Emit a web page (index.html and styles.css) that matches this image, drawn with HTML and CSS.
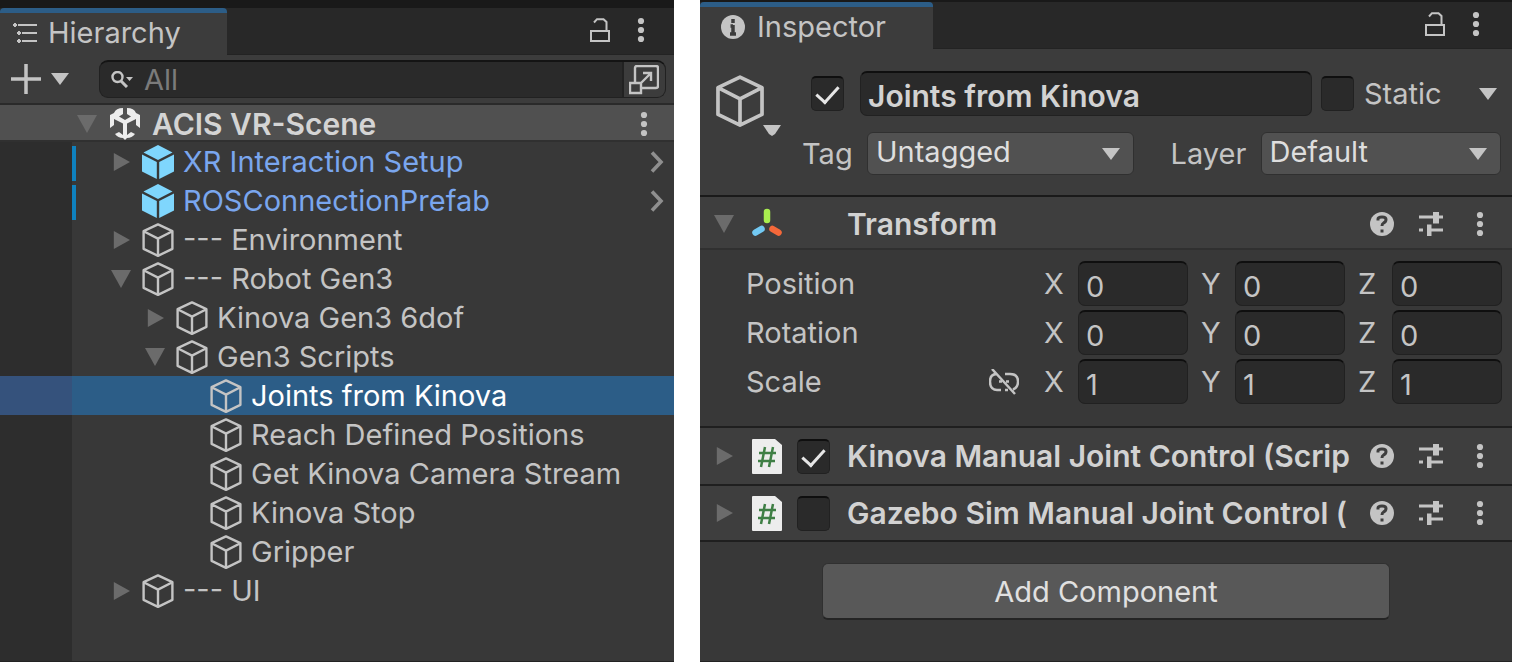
FILE: index.html
```html
<!DOCTYPE html>
<html lang="en">
<head>
<meta charset="utf-8">
<title>ACIS VR-Scene</title>
<link rel="stylesheet" href="styles.css">
</head>
<body>
<svg class="defs" aria-hidden="true">
  <symbol id="cube" viewBox="0 0 32 34"><path d="M16 1.400 30.400 8.200v17.600L16 32.800 1.600 25.800V8.200zM1.600 8.200 16 15.600 30.400 8.200M16 15.600v17.200" fill="none" stroke="currentColor" stroke-width="2.400" stroke-linejoin="round"/></symbol>
  <symbol id="prefab" viewBox="0 0 32 34"><path d="M16 0 30.500 7.500 16 15 1.500 7.500z" fill="#7fd6fd"/><path d="M0 9.500 14.800 17v17L0 26.500zM32 9.500 17.200 17v17L32 26.500z" fill="#7fd6fd"/></symbol>
  <symbol id="down" viewBox="0 0 20 18"><path d="M0 0h20L10 18z" fill="currentColor"/></symbol>
  <symbol id="right" viewBox="0 0 20 20"><path d="M2 0v20l18-10z" fill="currentColor"/></symbol>
  <symbol id="caret" viewBox="0 0 18 12"><path d="M0 0h18L9 12z" fill="currentColor"/></symbol>
  <symbol id="chevron" viewBox="0 0 14 22"><path d="M2 1.500l9 9.500-9 9.500" fill="none" stroke="currentColor" stroke-width="3.600"/></symbol>
  <symbol id="dots" viewBox="0 0 8 26"><circle cx="4" cy="4" r="3.100" fill="currentColor"/><circle cx="4" cy="13" r="3.100" fill="currentColor"/><circle cx="4" cy="22" r="3.100" fill="currentColor"/></symbol>
  <symbol id="lock" viewBox="0 0 20 24"><path d="M1 13h18v10H1zM4 4.500 7 1.200h6.500L16.500 4v9" fill="none" stroke="currentColor" stroke-width="2"/></symbol>
  <symbol id="help" viewBox="0 0 24 24"><circle cx="12" cy="12" r="12" fill="currentColor"/><path d="M8 8.500V7q0-2 4-2t4 2.500q0 2.500-2.500 3.500-1.500.700-1.500 3M12 17.500v3" fill="none" stroke="#3e3e3e" stroke-width="3"/></symbol>
  <symbol id="sliders" viewBox="0 0 24 24"><path d="M0 5h14M19 5h5M0 18h4M11 18h13" fill="none" stroke="currentColor" stroke-width="2.800"/><path d="M14 0h6v11.500h-6zM8 12.500h4.500V24H8z" fill="currentColor"/></symbol>
  <symbol id="script" viewBox="0 0 30 35"><path d="M1 0h22l7 6v28q0 1-1 1H1q-1 0-1-1V1q0-1 1-1z" fill="#ededed"/><path d="M13 8 9 28M21 8l-4 20M7 14h17M6 22h17" fill="none" stroke="#3f7f45" stroke-width="2.500"/></symbol>
</svg>

<main class="editor">
  <section class="panel hierarchy" aria-label="Hierarchy">
    <header class="tabs">
      <button class="tab" type="button">
        <svg class="tab-list" viewBox="0 0 24 20"><path d="M5 2h19M9 10h15M9 18h15M0 2h4M2 0v4M4 10h4M6 8v4M4 18h4M6 16v4" fill="none" stroke="currentColor" stroke-width="2"/></svg>
        Hierarchy
      </button>
      <button class="icon-btn lock" type="button" aria-label="Lock"><svg><use href="#lock"/></svg></button>
      <button class="icon-btn dots" type="button" aria-label="Menu"><svg><use href="#dots"/></svg></button>
    </header>
    <div class="toolbar">
      <button class="icon-btn add" type="button" aria-label="Create">
        <svg class="plus" viewBox="0 0 30 30"><path d="M15 0v30M0 15h30" stroke="currentColor" stroke-width="3.500"/></svg>
        <svg class="caret"><use href="#caret"/></svg>
      </button>
      <div class="search">
        <svg class="lens" viewBox="0 0 22 17"><circle cx="6.500" cy="6" r="5" fill="none" stroke="currentColor" stroke-width="2.400"/><path d="m10 10 6 6" stroke="currentColor" stroke-width="3"/><path d="M15 6h7l-3.500 4z" fill="currentColor"/></svg>
        <input class="search-text" type="text" placeholder="All" aria-label="Search hierarchy">
        <button class="search-open" type="button" aria-label="Open search"><svg viewBox="0 0 30 30"><path d="M6 18V3q0-2 2-2h19q2 0 2 2v18q0 2-2 2H13M1 18h11v10H1zM11 19 21 9M14 8h8v8" fill="none" stroke="currentColor" stroke-width="2.400"/></svg></button>
      </div>
    </div>
    <div class="scene">
      <svg class="fold"><use href="#down"/></svg>
      <svg class="scene-logo" viewBox="0 0 30 32"><path d="M13 0v6L9 8.500l6 3.500 6-3.500L17 6V0q7 0 9 5l4 2v13l-4-3v-6l-9 4.500V27l4-3 4 2q-3 4-8 4l-2 2-2-2q-5 0-8-4l4-2 4 3V15.500L4 11v6l-4 3V7l4-2q2-5 9-5z" fill="#ececec"/></svg>
      <strong class="scene-name">ACIS VR-Scene</strong>
      <button class="icon-btn dots" type="button" aria-label="Scene menu"><svg><use href="#dots"/></svg></button>
    </div>
    <ul class="tree">
      <li class="row prefab"><svg class="fold"><use href="#right"/></svg><svg class="cube"><use href="#prefab"/></svg><span class="name">XR Interaction Setup</span><svg class="chevron"><use href="#chevron"/></svg></li>
      <li class="row prefab"><span class="fold"></span><svg class="cube"><use href="#prefab"/></svg><span class="name">ROSConnectionPrefab</span><svg class="chevron"><use href="#chevron"/></svg></li>
      <li class="row"><svg class="fold"><use href="#right"/></svg><svg class="cube"><use href="#cube"/></svg><span class="name">--- Environment</span></li>
      <li class="row"><svg class="fold"><use href="#down"/></svg><svg class="cube"><use href="#cube"/></svg><span class="name">--- Robot Gen3</span></li>
      <li class="row level-2"><svg class="fold"><use href="#right"/></svg><svg class="cube"><use href="#cube"/></svg><span class="name">Kinova Gen3 6dof</span></li>
      <li class="row level-2"><svg class="fold"><use href="#down"/></svg><svg class="cube"><use href="#cube"/></svg><span class="name">Gen3 Scripts</span></li>
      <li class="row level-3 selected"><svg class="cube"><use href="#cube"/></svg><span class="name">Joints from Kinova</span></li>
      <li class="row level-3"><svg class="cube"><use href="#cube"/></svg><span class="name">Reach Defined Positions</span></li>
      <li class="row level-3"><svg class="cube"><use href="#cube"/></svg><span class="name">Get Kinova Camera Stream</span></li>
      <li class="row level-3"><svg class="cube"><use href="#cube"/></svg><span class="name">Kinova Stop</span></li>
      <li class="row level-3"><svg class="cube"><use href="#cube"/></svg><span class="name">Gripper</span></li>
      <li class="row"><svg class="fold"><use href="#right"/></svg><svg class="cube"><use href="#cube"/></svg><span class="name">--- UI</span></li>
    </ul>
  </section>

  <section class="panel inspector" aria-label="Inspector">
    <header class="tabs">
      <button class="tab" type="button">
        <svg class="tab-info" viewBox="0 0 24 24"><circle cx="12" cy="12" r="12" fill="currentColor"/><path d="M12 4v4M12 10v10M9.500 11H12M9 19h6" stroke="#3c3c3c" stroke-width="3.500"/></svg>
        Inspector
      </button>
      <button class="icon-btn lock" type="button" aria-label="Lock"><svg><use href="#lock"/></svg></button>
      <button class="icon-btn dots" type="button" aria-label="Menu"><svg><use href="#dots"/></svg></button>
    </header>

    <div class="object">
      <button class="icon-btn object-icon" type="button" aria-label="Choose icon">
        <svg class="big-cube"><use href="#cube"/></svg>
        <svg class="small-caret" viewBox="0 0 18 11"><path d="M0 0h18l-6 9-3 2-3-2z" fill="currentColor"/></svg>
      </button>
      <div class="object-fields">
        <div class="line name-line">
          <input class="check" type="checkbox" checked aria-label="Active">
          <input class="field object-name" type="text" value="Joints from Kinova" aria-label="Name">
          <input class="check" type="checkbox" id="static">
          <label class="static-label" for="static">Static</label>
          <button class="icon-btn" type="button" aria-label="Static flags"><svg class="caret"><use href="#caret"/></svg></button>
        </div>
        <div class="line tag-line">
          <label class="tag-label" for="tag">Tag</label>
          <div class="select tag"><select id="tag"><option>Untagged</option></select><svg class="caret"><use href="#caret"/></svg></div>
          <label class="layer-label" for="layer">Layer</label>
          <div class="select layer"><select id="layer"><option>Default</option></select><svg class="caret"><use href="#caret"/></svg></div>
        </div>
      </div>
    </div>

    <div class="component">
      <svg class="fold"><use href="#down"/></svg>
      <svg class="component-icon" viewBox="0 0 30 35"><g stroke-width="6.500" stroke-linecap="round"><path d="M15 6v8" stroke="#a9ee4f"/><path d="m20.500 23 6 3.500" stroke="#f4683a"/><path d="M9.500 23l-6 3.500" stroke="#72c9f3"/></g></svg>
      <span class="check-space"></span>
      <h2 class="component-name">Transform</h2>
      <button class="icon-btn help" type="button" aria-label="Help"><svg><use href="#help"/></svg></button>
      <button class="icon-btn presets" type="button" aria-label="Presets"><svg><use href="#sliders"/></svg></button>
      <button class="icon-btn dots" type="button" aria-label="Component menu"><svg><use href="#dots"/></svg></button>
    </div>
    <div class="vectors">
      <div class="vector"><span class="vector-name">Position</span>
        <label class="axis">X<input class="field" type="text" value="0"></label>
        <label class="axis">Y<input class="field" type="text" value="0"></label>
        <label class="axis">Z<input class="field" type="text" value="0"></label></div>
      <div class="vector"><span class="vector-name">Rotation</span>
        <label class="axis">X<input class="field" type="text" value="0"></label>
        <label class="axis">Y<input class="field" type="text" value="0"></label>
        <label class="axis">Z<input class="field" type="text" value="0"></label></div>
      <div class="vector"><span class="vector-name">Scale
        <button class="icon-btn link" type="button" aria-label="Constrain proportions"><svg viewBox="0 0 30 26"><path d="M8 5Q1 5 1 12.500 1 21 8 21h4M16 5h5q8 0 8 7.500 0 6-5 8M10 12.500h3M17 12.500h3M19 21h-3M3 0l23 25" fill="none" stroke="currentColor" stroke-width="2.500"/></svg></button></span>
        <label class="axis">X<input class="field" type="text" value="1"></label>
        <label class="axis">Y<input class="field" type="text" value="1"></label>
        <label class="axis">Z<input class="field" type="text" value="1"></label></div>
    </div>

    <div class="component">
      <svg class="fold"><use href="#right"/></svg>
      <svg class="component-icon"><use href="#script"/></svg>
      <input class="check" type="checkbox" checked aria-label="Enable Kinova Manual Joint Control">
      <h2 class="component-name">Kinova Manual Joint Control (Scrip</h2>
      <button class="icon-btn help" type="button" aria-label="Help"><svg><use href="#help"/></svg></button>
      <button class="icon-btn presets" type="button" aria-label="Presets"><svg><use href="#sliders"/></svg></button>
      <button class="icon-btn dots" type="button" aria-label="Component menu"><svg><use href="#dots"/></svg></button>
    </div>
    <div class="component last">
      <svg class="fold"><use href="#right"/></svg>
      <svg class="component-icon"><use href="#script"/></svg>
      <input class="check" type="checkbox" aria-label="Enable Gazebo Sim Manual Joint Control">
      <h2 class="component-name">Gazebo Sim Manual Joint Control (</h2>
      <button class="icon-btn help" type="button" aria-label="Help"><svg><use href="#help"/></svg></button>
      <button class="icon-btn presets" type="button" aria-label="Presets"><svg><use href="#sliders"/></svg></button>
      <button class="icon-btn dots" type="button" aria-label="Component menu"><svg><use href="#dots"/></svg></button>
    </div>
    <button class="add-component" type="button">Add Component</button>
  </section>
</main>
</body>
</html>
```
FILE: styles.css
```css
* { box-sizing: border-box; }

body {
  margin: 0;
  background: #fff;
  color: #c4c4c4;
  font: 29px/36px Inter, "Liberation Sans", sans-serif;
}

button, input, select {
  margin: 0;
  padding: 0;
  border: 0;
  background: none;
  color: inherit;
  font: inherit;
}

svg { display: block; flex: none; }
.defs { position: absolute; width: 0; height: 0; }

.editor {
  display: flex;
  gap: 26px;
  min-height: 100vh;
  padding-right: 2px;
}
.panel {
  display: flex;
  flex-direction: column;
  min-width: 0;
  background: #383838;
  border-bottom: 1px solid #232323;
}
.hierarchy { flex: 674 1 0; border-top: 8px solid #191919; }
.inspector { flex: 812 1 0; border-top: 2px solid #191919; }

/* Tab strip */
.tabs {
  display: flex;
  align-items: center;
  height: 47px;
  padding-right: 32px;
  background: #282828;
  border-bottom: 1px solid #232323;
}
.tab {
  display: flex;
  align-items: center;
  align-self: stretch;
  width: 233px;
  margin: 0 auto -1px 0;
  padding: 0 0 2px 21px;
  background: #3c3c3c;
  border-top: 5px solid #2c5d87;
  border-radius: 4px 4px 0 0;
}
.hierarchy .tab { width: 227px; padding-left: 13px; }
.tab-list { width: 24px; height: 20px; margin-right: 11px; }
.tab-info { width: 24px; height: 24px; margin-right: 12px; }

.icon-btn { display: flex; flex: none; align-items: center; }
.tabs .icon-btn { padding-bottom: 3px; }
.lock svg { width: 20px; height: 24px; }
.dots svg { width: 8px; height: 26px; }
.tabs .dots { margin-left: 27px; }
.hierarchy .tabs { padding-right: 29px; }
.help svg, .presets svg { width: 24px; height: 24px; }
.caret { width: 18px; height: 12px; }

/* Hierarchy */
.toolbar {
  display: flex;
  align-items: center;
  gap: 30px;
  height: 50px;
  padding: 0 8px 0 11px;
  background: #3c3c3c;
  border-bottom: 2px solid #2a2a2a;
}
.add { gap: 10px; }
.plus { width: 30px; height: 30px; }
.search {
  display: flex;
  flex: 1;
  align-items: center;
  min-width: 0;
  height: 38px;
  padding-left: 11px;
  background: #2a2a2a;
  border: 1px solid #212121;
  border-top: 2px solid #141414;
  border-radius: 9px;
}
.lens { width: 22px; height: 17px; margin-right: 11px; }
.search-text { flex: 1; min-width: 0; }
.search-text::placeholder { color: #7b7b7b; opacity: 1; }
.search-open {
  display: flex;
  align-items: center;
  align-self: stretch;
  padding: 0 6px 0 5px;
  background: #3c3c3c;
  border-left: 2px solid #222;
  border-radius: 0 8px 8px 0;
}
.search-open svg { width: 30px; height: 30px; }

.fold { flex: none; width: 20px; height: 18px; color: #6b6b6b; }
.scene {
  display: flex;
  align-items: center;
  height: 37px;
  padding: 2px 26px 0 77px;
  background: #505050;
  border-bottom: 2px solid #303030;
}
.scene-logo { width: 30px; height: 32px; margin: 0 12px 0 13px; }
.scene-name { flex: 1; font-size: 30px; font-weight: 600; color: #d4d4d4; }

.tree {
  flex: 1;
  margin: 0;
  padding: 0;
  list-style: none;
  background: linear-gradient(to right, #2d2d2d 72px, #383838 72px);
}
.row {
  display: flex;
  align-items: center;
  height: 39px;
  padding: 0 10px 0 111px;
}
.row .cube { width: 32px; height: 34px; margin: 0 9px 0 11px; }
.level-2 { padding-left: 145px; }
.level-3 { padding-left: 199px; }
.name { flex: 1; white-space: nowrap; }
.prefab {
  color: #7aa6ee;
  background: linear-gradient(#0f81be, #0f81be) 72px 100% / 4px 35px no-repeat;
}
.chevron { width: 14px; height: 22px; color: #8f8f8f; }
.selected {
  color: #fff;
  background: linear-gradient(to right, #35527c 72px, #2c5d87 72px);
}
.selected .cube { color: #c4c4c4; }

/* Inspector */
.field {
  min-width: 0;
  height: 45px;
  padding: 4px 7px 0;
  background: #2a2a2a;
  border: 1px solid #212121;
  border-top: 2px solid #0f0f0f;
  border-radius: 7px;
}
.check {
  flex: none;
  width: 33px;
  height: 35px;
  appearance: none;
  background: #2a2a2a;
  border: 1px solid #212121;
  border-top: 2px solid #0f0f0f;
  border-radius: 5px;
}
.check:checked::before {
  content: "";
  display: block;
  width: 10px;
  height: 19px;
  margin: 3px 0 0 9px;
  border: solid #e6e6e6;
  border-width: 0 3px 3px 0;
  transform: rotate(42deg);
}

.object {
  display: flex;
  padding: 22px 11px 20px 15px;
  background: #3c3c3c;
  border-bottom: 2px solid #1a1a1a;
}
.object-icon {
  position: relative;
  align-self: flex-start;
  width: 87px;
  padding-top: 4px;
}
.big-cube { width: 50px; height: 52px; }
.small-caret { position: absolute; left: 48px; top: 54px; width: 18px; height: 11px; }
.object-fields { flex: 1; min-width: 0; }
.line { display: flex; align-items: center; }
.name-line { padding: 0 4px 0 9px; margin-bottom: 16px; }
.object-name { flex: 1; margin: 0 9px 0 16px; font-size: 30px; font-weight: 600; color: #d2d2d2; }
.static-label { width: 125px; padding-left: 10px; }
.select { position: relative; display: flex; align-items: center; min-width: 0; }
.select select {
  width: 100%;
  height: 43px;
  padding: 0 40px 4px 8px;
  appearance: none;
  background: #515151;
  border: 1px solid #303030;
  border-radius: 6px;
  color: #dedede;
}
.select .caret { position: absolute; right: 14px; pointer-events: none; }
.tag-label { width: 53px; }
.layer-label { width: 82px; }
.tag { flex: 266 1 0; margin: 0 37px 0 12px; }
.layer { flex: 240 1 0; margin-left: 8px; }

.component {
  display: flex;
  align-items: center;
  height: 58px;
  padding: 0 28px 0 14px;
  background: #3e3e3e;
  border-bottom: 2px solid #1f1f1f;
}
.component-icon { width: 30px; height: 35px; margin: 0 15px 0 18px; }
.check-space { width: 33px; }
.component-name {
  flex: 1;
  min-width: 0;
  margin: 0 17px;
  overflow: hidden;
  font-size: 30px;
  font-weight: 600;
  white-space: nowrap;
  color: #d2d2d2;
}
.presets { margin: 0 33px 0 25px; }
.object + .component { height: 53px; padding-top: 2px; border-bottom-color: #303030; }
.last { height: 56px; }

.vectors {
  display: grid;
  gap: 4px;
  padding: 11px 10px 22px 46px;
  border-bottom: 2px solid #1f1f1f;
}
.vector {
  display: grid;
  grid-template-columns: 285fr 144fr 144fr 144fr;
  column-gap: 13px;
  align-items: center;
}
.vector-name { display: flex; align-items: center; justify-content: space-between; }
.link { margin-right: 12px; }
.link svg { width: 30px; height: 26px; }
.axis { display: grid; grid-template-columns: 34px 1fr; align-items: center; }
.axis .field { width: 100%; }

.add-component {
  align-self: center;
  width: 70%;
  height: 57px;
  margin-top: 21px;
  padding-top: 2px;
  background: #585858;
  border: 1px solid #303030;
  border-bottom: 2px solid #242424;
  border-radius: 6px;
  color: #e0e0e0;
}
```
